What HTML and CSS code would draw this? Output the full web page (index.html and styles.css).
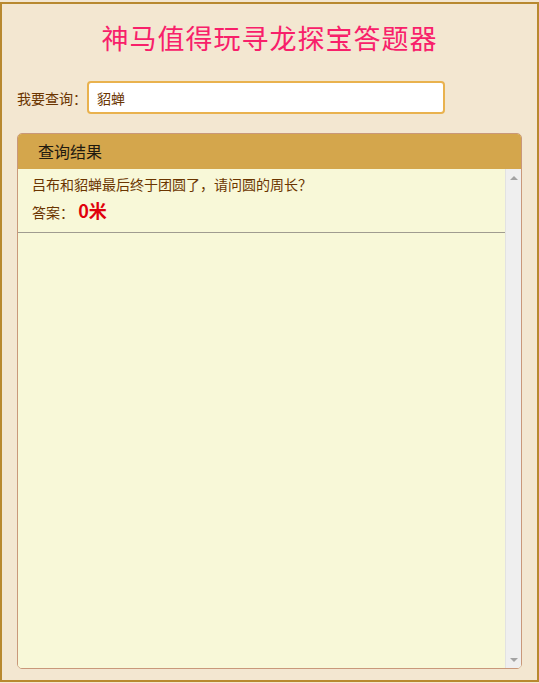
FILE: index.html
```html
<!DOCTYPE html>
<html lang="zh">
<head>
<meta charset="utf-8">
<title>神马值得玩寻龙探宝答题器</title>
<link rel="stylesheet" href="styles.css">
</head>
<body>
<div class="page">
  <h1 class="title">神马值得玩寻龙探宝答题器</h1>
  <div class="search">
    <label class="search-label" for="q">我要查询：</label>
    <input id="q" class="search-input" type="text" value="貂蝉">
  </div>
  <div class="panel">
    <div class="panel-head">查询结果</div>
    <div class="panel-body">
      <div class="results">
        <div class="item">
          <div class="question">吕布和貂蝉最后终于团圆了，请问圆的周长？</div>
          <div class="answer">答案： <span class="answer-value">0米</span></div>
        </div>
      </div>
      <div class="scrollbar">
        <span class="arrow arrow-up"></span>
        <span class="arrow arrow-down"></span>
      </div>
    </div>
  </div>
</div>
</body>
</html>
```
FILE: styles.css
```css
html, body {
  margin: 0;
  padding: 0;
  background: #f3e7d1;
}
body {
  padding-top: 2px;
  font-family: "Noto Sans CJK SC", "Noto Sans", sans-serif;
}
.page {
  box-sizing: border-box;
  width: 539px;
  height: 680px;
  border: 2px solid #b8892f;
  background: #f3e7d1;
  padding: 0 15px;
}
.title {
  margin: 14px 0 0;
  text-align: center;
  font-size: 27px;
  line-height: 40px;
  font-weight: normal;
  color: #f8206a;
  letter-spacing: 1px;
}
.search {
  display: flex;
  align-items: center;
  margin-top: 23px;
}
.search-label {
  font-size: 14px;
  color: #6b3500;
  width: 70px;
}
.search-input {
  box-sizing: border-box;
  width: 358px;
  height: 33px;
  margin: 0;
  border: 2px solid #e9b24e;
  border-radius: 4px;
  background: #fff;
  padding: 0 8px;
  font-family: "Noto Sans CJK SC", sans-serif;
  font-size: 14px;
  color: #6b3500;
  outline: none;
}
.panel {
  box-sizing: border-box;
  margin-top: 19px;
  height: 536px;
  border: 1px solid #c9987a;
  border-radius: 5px;
  overflow: hidden;
  display: flex;
  flex-direction: column;
  background: #f8f8d8;
}
.panel-head {
  height: 35px;
  flex: none;
  background: #d4a64c;
  color: #1f1a10;
  font-size: 16px;
  line-height: 35px;
  padding-left: 20px;
}
.panel-body {
  flex: 1;
  display: flex;
  background: #f8f8d8;
}
.results {
  flex: 1;
}
.item {
  padding: 2px 14px 7px;
  border-bottom: 1px solid #a09c90;
  color: #6b3500;
  font-size: 14px;
}
.question, .answer {
  line-height: 26px;
}
.answer-value {
  color: #e0000c;
  font-size: 18px;
  font-weight: bold;
  margin-left: 1px;
}
.scrollbar {
  box-sizing: border-box;
  width: 16px;
  flex: none;
  background: #efefef;
  border-left: 1px solid #e2e2e2;
  display: flex;
  flex-direction: column;
  justify-content: space-between;
  align-items: center;
  padding: 7px 0 6px;
}
.arrow {
  width: 0;
  height: 0;
  border-left: 4px solid transparent;
  border-right: 4px solid transparent;
}
.arrow-up {
  border-bottom: 4px solid #a3a3a3;
}
.arrow-down {
  border-top: 4px solid #a3a3a3;
}
```
